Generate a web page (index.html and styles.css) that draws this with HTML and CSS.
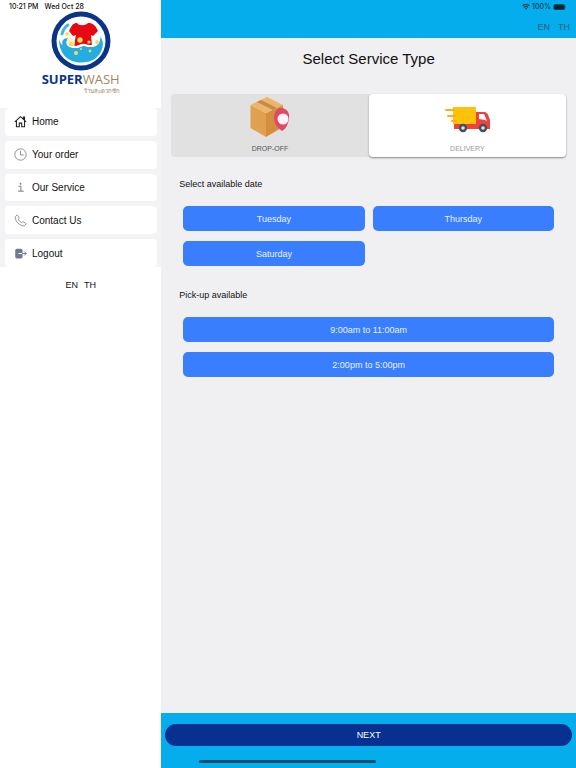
FILE: index.html
```
<!DOCTYPE html>
<html lang="en">
<head>
  <meta charset="UTF-8">
  <meta name="viewport" content="width=device-width, initial-scale=1.0">
  <title>Super Wash</title>
  <link rel="stylesheet" href="styles.css">
</head>
<body>

  <div class="status-bar">
    <span class="status-time">10:21 PM</span>
    <span>Wed Oct 28</span>
    <span class="status-right">
      <svg class="wifi" viewBox="0 0 16 12"><path d="M8 11.6 10.3 8.8a3.6 3.6 0 0 0-4.6 0zM4.6 7.6a5.2 5.2 0 0 1 6.8 0l1.5-1.8a7.5 7.5 0 0 0-9.8 0zM2 4.5a9.2 9.2 0 0 1 12 0l1.5-1.8a11.6 11.6 0 0 0-15 0z" fill="#083a50"/></svg>
      100%
      <svg class="battery" viewBox="0 0 26 12"><rect x=".5" y=".5" width="22" height="11" rx="3" fill="#05232f" stroke="#06506c"/><path d="M24 4v4q1.600-2 0-4z" fill="#06506c"/></svg>
    </span>
  </div>

  <div class="app">
    <aside class="sidebar">
      <div class="logo">
        <svg class="logo-mark" viewBox="0 0 60 60">
          <circle cx="30" cy="30" r="29.500" fill="#0b3487"/>
          <circle cx="30" cy="30" r="24.500" fill="#fff"/>
          <path d="M8 28C8 43 17 51.500 30 51.500c12 0 19-6 21.500-15 1-4 0-8-2-11 0 7-4 11-9 10-4-2-8-1-12 1-4 1-9 1-12-2-2-3-1-5 1-7-5-1-7 2-6 7-2-2-3-4-3.500-6.500z" fill="#25ace0"/>
          <path d="M11 23c1-4 3-7 6-9" fill="none" stroke="#43b8de" stroke-width="3" stroke-linecap="round"/>
          <path d="M26 12c2 3 8 3 11 0 4 0 7 1 10 8l-5 5-2-1 1 11c-4-1-8-2-12 0-2 1-4 1-6-1l2-10-3 1-4-5c3-6 4-8 8-8z" fill="#e60914"/>
          <path d="M23 36c6 0 6-3 11-2 5 2 9 2 13-3" fill="none" stroke="#fff" stroke-width="2"/>
          <path d="M19 25c-4 3-4 8 0 10 3 1 5-1 5-4z" fill="#fff1c0"/>
          <g fill="#f8dc50">
            <circle cx="29" cy="29" r="2.700"/>
            <circle cx="38" cy="31" r="1.600"/>
            <circle cx="46" cy="31" r="2"/>
            <circle cx="16" cy="23" r="1.800"/>
            <circle cx="20" cy="33" r="2.200"/>
            <circle cx="25" cy="42" r="2"/>
            <circle cx="39" cy="40" r="1.400"/>
            <circle cx="30" cy="38" r="1"/>
          </g>
        </svg>
        <div class="logo-name"><b>SUPER</b>WASH</div>
        <div class="logo-thai" lang="th">ร้านสะดวกซัก</div>
      </div>

      <nav>
        <ul class="menu">
          <li><a href="#">
            <svg viewBox="0 0 16 16" fill="none" stroke="#222" stroke-width="1.300"><path d="M1 8.500 8 2l7 6.500M3 7v7.500h3.500V10h3v4.500H13V7M11.500 5V2.500H13v4"/></svg>
            Home</a></li>
          <li><a href="#">
            <svg viewBox="0 0 16 16" fill="none" stroke="#777b80"><circle cx="8" cy="8" r="7"/><path d="M8 3.500V8.500h4"/></svg>
            Your order</a></li>
          <li><a href="#">
            <svg viewBox="0 0 16 16" fill="none" stroke="#777b80" stroke-width="1.200"><path d="M5.500 6.500h3v6M5 12.500h7"/><circle cx="8" cy="3.500" r=".7" fill="#777b80"/></svg>
            Our Service</a></li>
          <li><a href="#">
            <svg viewBox="0 0 16 16" fill="none" stroke="#777b80"><path d="M3.500 1.500C2 2.300 1.200 3.500 1.500 5c.8 4.500 5 8.800 9.500 9.500 1.500.3 2.800-.5 3.500-2 .2-.5 0-.8-.4-1.100l-2.600-1.800c-.4-.3-.8-.2-1.100.1l-.9.9C7.500 9.800 6.200 8.500 5.400 6.500l.9-.9c.3-.3.4-.7.1-1.100L4.600 1.900c-.3-.4-.7-.6-1.100-.4z"/></svg>
            Contact Us</a></li>
          <li><a href="#">
            <svg viewBox="0 0 16 16"><path d="M3.500 2h5a2 2 0 0 1 2 2v3.300H5.500v1.400h5V12a2 2 0 0 1-2 2h-5a2 2 0 0 1-2-2V4a2 2 0 0 1 2-2z" fill="#74788e"/><path d="M10 8h5M12.500 5.500 15 8l-2.500 2.500" fill="none" stroke="#74788e" stroke-width="1.200"/></svg>
            Logout</a></li>
        </ul>
      </nav>

      <div class="side-lang">
        <a href="#">EN</a>
        <a href="#">TH</a>
      </div>
    </aside>

    <div class="page">
      <header class="toolbar">
        <a href="#">EN</a>
        <a href="#">TH</a>
      </header>

      <main class="content">
        <h1>Select Service Type</h1>

        <!-- Service type -->
        <div class="segment">
          <button type="button" class="segment-btn">
            <svg class="segment-icon" viewBox="0 0 48 48">
              <path d="M4.500 11 20 19v24L4.500 34z" fill="#e0a050"/>
              <path d="m20 19 17-8v22L20 43z" fill="#d48e40"/>
              <path d="M4.500 11 21 3l16 8-17 8z" fill="#eab66c"/>
              <path d="m11 8 4-2 16 8-4 2z" fill="#c98845"/>
              <path d="M35 14c6 0 9 5 8 11-1 5-3 10-7 12-4-3-8-7-8-13 0-6 3-10 7-10z" fill="#e14a66"/>
              <circle cx="37" cy="25" r="5.500" fill="#fff1f7"/>
            </svg>
            DROP-OFF
          </button>
          <button type="button" class="segment-btn active">
            <svg class="segment-icon" viewBox="0 0 48 48">
              <path d="M11 29h22V18h8c3 0 4 2 6 8v9H11z" fill="#f0413c"/>
              <path d="M10 13h23v17H10z" fill="#ffc20a"/>
              <path d="M3 16h8M5 22h7M9 27h4" stroke="#ffad12" stroke-width="2" stroke-linecap="round"/>
              <path d="M36 20h5l3 7-2-1-6-1z" fill="#fff"/>
              <circle cx="20" cy="34" r="4.200" fill="#42515c"/>
              <circle cx="20" cy="34" r="1.800" fill="#d9e2e7"/>
              <circle cx="40" cy="34" r="4.200" fill="#42515c"/>
              <circle cx="40" cy="34" r="1.800" fill="#d9e2e7"/>
            </svg>
            DELIVERY
          </button>
        </div>

        <section>
          <h2>Select available date</h2>
          <div class="dates">
            <button type="button" class="option">Tuesday</button>
            <button type="button" class="option">Thursday</button>
            <button type="button" class="option">Saturday</button>
          </div>
        </section>

        <section>
          <h2>Pick-up available</h2>
          <div class="times">
            <button type="button" class="option">9:00am to 11:00am</button>
            <button type="button" class="option">2:00pm to 5:00pm</button>
          </div>
        </section>
      </main>

      <footer class="footer">
        <button type="button" class="next-btn">NEXT</button>
      </footer>
    </div>
  </div>

  <div class="home-indicator"></div>

</body>
</html>
```

FILE: styles.css
```
/* General Styles */
* {
  box-sizing: border-box;
}

body {
  margin: 0;
  font-family: 'Liberation Sans', Arial, sans-serif;
  font-size: 9px;
  color: #111;
}

a {
  color: inherit;
  text-decoration: none;
}

button {
  border: none;
  padding: 0;
  font-family: inherit;
  font-size: 9px;
  cursor: pointer;
}

.app {
  display: flex;
  min-height: 100vh;
}

/* Status bar */
.status-bar {
  position: absolute;
  top: 0;
  left: 0;
  right: 0;
  display: flex;
  gap: 6px;
  padding: 0 9px;
  font-family: Inter, sans-serif;
  font-size: 7px;
  font-weight: 500;
  line-height: 14px;
}

.status-right {
  display: flex;
  align-items: center;
  gap: 2px;
  margin-left: auto;
  color: #083a50;
}

.wifi {
  width: 8px;
  height: 6px;
}

.battery {
  width: 14px;
  height: 6px;
}

/* Side menu */
.sidebar {
  width: 28%;
  background-color: #fff;
}

.logo {
  display: flex;
  flex-direction: column;
  align-items: center;
  height: 108px;
  padding-top: 11px;
}

.logo-mark {
  width: 60px;
  height: 60px;
}

.logo-name {
  font-family: 'Open Sans', sans-serif;
  font-size: 13px;
  line-height: 16px;
  color: #a38560;
}

.logo-name b {
  color: #0b3487;
}

.logo-thai {
  align-self: flex-end;
  margin-right: 41px;
  font-size: 6px;
  line-height: 8px;
  color: #a38560;
}

.menu {
  display: flex;
  flex-direction: column;
  gap: 5px;
  min-height: 159px;
  margin: 0;
  padding: 0 4px 0 5px;
  list-style: none;
  background-color: #f3f2f4;
}

.menu li {
  display: flex;
  flex: 1;
}

.menu a {
  display: flex;
  flex: 1;
  align-items: center;
  gap: 5px;
  padding: 0 9px;
  border-radius: 4px;
  background-color: #fff;
  font-size: 10px;
}

.menu svg {
  width: 13px;
  height: 13px;
}

.side-lang {
  display: flex;
  justify-content: center;
  gap: 6px;
  padding-top: 12px;
  line-height: 12px;
}

/* Main page */
.page {
  display: flex;
  flex: 1;
  flex-direction: column;
  background-color: #f0eff1;
}

.toolbar {
  display: flex;
  justify-content: flex-end;
  gap: 8px;
  height: 38px;
  padding: 21px 6px 0;
  background-color: #06adec;
  color: #17617e;
  line-height: 12px;
}

.content {
  flex: 1;
  padding: 12px 10px;
}

h1 {
  margin: 0 0 26px;
  font-size: 15px;
  font-weight: normal;
  line-height: 18px;
  text-align: center;
}

h2 {
  margin: 0 0 16px;
  font-size: 9px;
  font-weight: normal;
  line-height: 12px;
}

section {
  padding: 21px 12px 2px;
}

section h2 {
  margin-left: -4px;
}

.segment {
  display: flex;
  height: 63px;
  border-radius: 4px;
  background-color: #e1e1e2;
}

.segment-btn {
  display: flex;
  flex: 1;
  flex-direction: column;
  align-items: center;
  border-radius: 4px;
  background-color: transparent;
  color: #555;
  font-size: 7px;
  line-height: 14px;
}

.segment-btn.active {
  background-color: #fff;
  color: #999;
  box-shadow: 0 1px 2px #888;
}

.segment-icon {
  width: 48px;
  height: 48px;
}

.dates,
.times {
  display: grid;
  gap: 10px 8px;
}

.dates {
  grid-template-columns: 1fr 1fr;
}

.option {
  height: 25px;
  border-radius: 5px;
  background-color: #387eff;
  color: #eaf2ff;
}

/* Footer */
.footer {
  height: 55px;
  padding: 11px 4px;
  background-color: #06adec;
}

.next-btn {
  width: 100%;
  height: 22px;
  border-radius: 11px;
  background-color: #073090;
  color: #fff;
}

.home-indicator {
  position: absolute;
  bottom: 5px;
  left: 50%;
  width: 177px;
  height: 3px;
  margin-left: -89px;
  border-radius: 2px;
  background-color: #06506c;
}
```
